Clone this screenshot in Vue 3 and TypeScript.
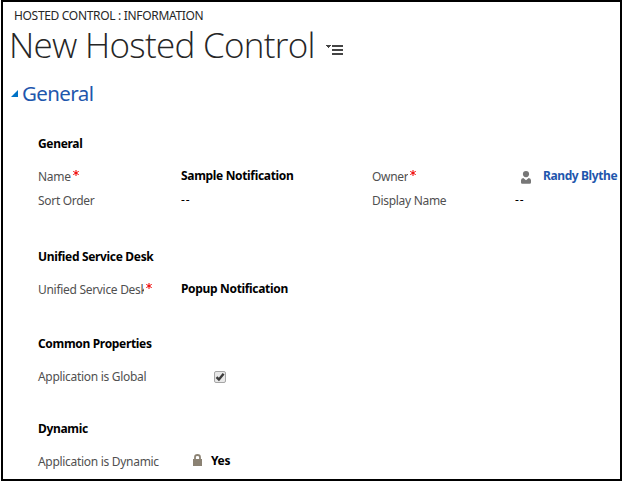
<script setup lang="ts">
interface Field {
  label: string
  value?: string
  required?: boolean
  kind?: 'text' | 'empty' | 'check' | 'lock' | 'person'
}

interface Section {
  title: string
  rows: Field[][]
}

const sections: Section[] = [
  {
    title: 'General',
    rows: [
      [
        { label: 'Name', value: 'Sample Notification', required: true },
        { label: 'Owner', value: 'Randy Blythe', required: true, kind: 'person' },
      ],
      [
        { label: 'Sort Order', value: '--', kind: 'empty' },
        { label: 'Display Name', value: '--', kind: 'empty' },
      ],
    ],
  },
  {
    title: 'Unified Service Desk',
    rows: [[{ label: 'Unified Service Desk', value: 'Popup Notification', required: true }]],
  },
  {
    title: 'Common Properties',
    rows: [[{ label: 'Application is Global', kind: 'check' }]],
  },
  {
    title: 'Dynamic',
    rows: [[{ label: 'Application is Dynamic', value: 'Yes', kind: 'lock' }]],
  },
]
</script>

<template>
  <main class="window">
    <div class="crumb">HOSTED CONTROL : INFORMATION</div>
    <header class="title-row">
      <h1>New Hosted Control</h1>
      <svg class="menu" width="18" height="11" viewBox="0 0 18 11" shape-rendering="crispEdges">
        <path d="M0 0h5v1H4v1H3v1H2V2H1V1H0z M6 0h11v2H6z M6 4h11v2H6z M6 8h11v2H6z" fill="#444" />
      </svg>
    </header>
    <div class="tab">
      <svg width="7" height="7" viewBox="0 0 7 7"><path d="M7 0v7H0z" fill="#0072c6" /></svg>
      <h2>General</h2>
    </div>

    <section v-for="s in sections" :key="s.title" class="section">
      <h3>{{ s.title }}</h3>
      <div v-for="(row, i) in s.rows" :key="i" class="row">
        <div v-for="f in row" :key="f.label" class="field">
          <div class="label">
            <span class="caption" :class="{ limited: f.required }">{{ f.label }}</span>
            <svg v-if="f.required" class="star" width="6" height="6" viewBox="0 0 6 6">
              <path d="M3 0v6M.3 1.4l5.4 3.2M5.7 1.4L.3 4.6" stroke="#f00000" stroke-width="1" />
            </svg>
          </div>
          <div class="value" :class="f.kind">
            <svg v-if="f.kind === 'person'" class="person-icon" width="10" height="13" viewBox="0 0 10 13">
              <circle cx="5" cy="3.1" r="3.1" fill="#777" />
              <path d="M0 11.5V9.2Q0 7.2 2.3 6.9L5 9.3l2.7-2.4Q10 7.2 10 9.2v2.3Q10 12.8 8.7 12.8H1.3Q0 12.8 0 11.5z" fill="#777" />
            </svg>
            <svg v-if="f.kind === 'lock'" class="lock-icon" width="9" height="12" viewBox="0 0 9 12">
              <path d="M2 6V3.2Q2 1 4.5 1T7 3.2V6" fill="none" stroke="#8b8273" stroke-width="1.8" />
              <path d="M0 5h9v7H0z" fill="#8b8273" />
            </svg>
            <svg v-if="f.kind === 'check'" class="check-icon" width="12" height="12" viewBox="0 0 12 12">
              <rect x=".5" y=".5" width="11" height="11" rx="1.5" fill="#e8e8e8" stroke="#a6a6a6" />
              <path d="M2.5 6.1l2.4 2.4L9.6 2.8" fill="none" stroke="#3c3c3c" stroke-width="2.4" />
            </svg>
            <span v-if="f.value">{{ f.value }}</span>
          </div>
        </div>
      </div>
    </section>
  </main>
</template>

<style>
body {
  margin: 0;
  background: #fff;
}
</style>

<style scoped>
.window {
  box-sizing: border-box;
  width: 621px;
  height: 481px;
  margin-left: 1px;
  border: 2px solid #000;
  background: #fff;
  overflow: hidden;
  font: 12px/16px 'Noto Sans', 'Open Sans', sans-serif;
  color: #000;
}
h1, h2, h3 {
  margin: 0;
  font-weight: 400;
}
.crumb {
  padding: 6px 0 0 11px;
  height: 16px;
  font-size: 12px;
  letter-spacing: -0.32px;
  color: #262626;
  white-space: nowrap;
}
.title-row {
  display: flex;
  height: 46px;
  padding-left: 6px;
}
h1 {
  width: 317px;
  font-family: 'Open Sans', 'Noto Sans', sans-serif;
  font-size: 35px;
  line-height: 41px;
  font-weight: 300;
  letter-spacing: -0.7px;
  color: #262626;
  white-space: nowrap;
}
.menu {
  margin-top: 21px;
}
.tab {
  display: flex;
  height: 66px;
  padding-left: 8px;
}
.tab svg {
  margin: 20px 4px 0 0;
}
h2 {
  font-size: 20.5px;
  line-height: 28px;
  margin-top: 9px;
  letter-spacing: -0.6px;
  color: #1f57ad;
}
.section {
  padding-left: 35px;
  height: 85px;
}
.section:nth-of-type(1) {
  height: 113px;
}
.section:nth-of-type(2) {
  height: 87px;
}
h3 {
  height: 33px;
  font-size: 12px;
  line-height: 16px;
  font-weight: 700;
  letter-spacing: -0.33px;
}
.row {
  display: flex;
  height: 24px;
}
.field {
  display: flex;
  width: 334px;
  flex: none;
}
.label {
  display: flex;
  width: 143px;
  color: #505050;
  white-space: nowrap;
  letter-spacing: -0.3px;
}
.limited {
  max-width: 106px;
  overflow: hidden;
}
.star {
  margin: 1px 0 0 2px;
  flex: none;
}
.value {
  display: flex;
  margin-top: -1px;
  font-weight: 700;
  letter-spacing: -0.33px;
  white-space: nowrap;
}
.empty {
  font-weight: 400;
  letter-spacing: 0.8px;
}
.person {
  color: #1f57ad;
  letter-spacing: -0.4px;
}
.person-icon {
  margin: 3px 12px 0 6px;
}
.lock-icon {
  margin: 1px 9px 0 12px;
}
.check-icon {
  margin: 3px 0 0 33px;
}
</style>
